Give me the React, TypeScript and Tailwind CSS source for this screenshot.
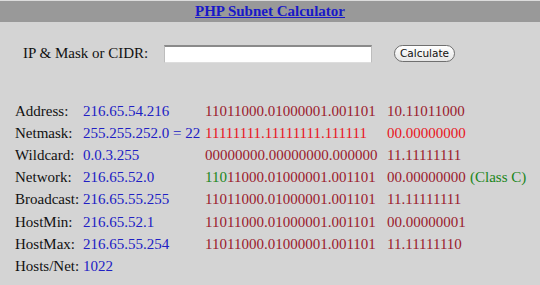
import React from "react";

const serif = { fontFamily: '"Liberation Serif", "Times New Roman", serif' };

type Row = {
  label: string;
  value: string;
  bin: React.ReactNode;
  last?: React.ReactNode;
  extra?: React.ReactNode;
};

const R = "text-[#9a1a2c]";
const RB = "text-[#e8141c]";
const G = "text-[#1a861a]";

const rows: Row[] = [
  { label: "Address:", value: "216.65.54.216", bin: <span className={R}>11011000.01000001.001101</span>, last: <span className={R}>10.11011000</span> },
  { label: "Netmask:", value: "255.255.252.0 = 22", bin: <span className={RB}>11111111.11111111.111111</span>, last: <span className={RB}>00.00000000</span> },
  { label: "Wildcard:", value: "0.0.3.255", bin: <span className={R}>00000000.00000000.000000</span>, last: <span className={R}>11.11111111</span> },
  {
    label: "Network:",
    value: "216.65.52.0",
    bin: (
      <span>
        <span className={G}>110</span>
        <span className={R}>11000.01000001.001101</span>
      </span>
    ),
    last: <span className={R}>00.00000000</span>,
    extra: <span className={G}>(Class C)</span>,
  },
  { label: "Broadcast:", value: "216.65.55.255", bin: <span className={R}>11011000.01000001.001101</span>, last: <span className={R}>11.11111111</span> },
  { label: "HostMin:", value: "216.65.52.1", bin: <span className={R}>11011000.01000001.001101</span>, last: <span className={R}>00.00000001</span> },
  { label: "HostMax:", value: "216.65.55.254", bin: <span className={R}>11011000.01000001.001101</span>, last: <span className={R}>11.11111110</span> },
  { label: "Hosts/Net:", value: "1022", bin: null },
];

export default function App() {
  return (
    <div className="w-[540px] h-[285px] bg-[#d4d4d4] overflow-hidden" style={serif}>
      <div className="h-[1px] bg-[#dcdcdc]" />
      <div className="h-[21px] bg-[#999999] flex items-center justify-center">
        <a className="text-[15px] font-bold text-[#1818c8] underline leading-none" href="#">
          PHP Subnet Calculator
        </a>
      </div>
      <div className="flex items-center pl-[23px] mt-[22px] h-[19px]">
        <span className="w-[141px] text-[15px] text-[#111] leading-none">IP &amp; Mask or CIDR:</span>
        <div className="w-[208px] h-[18px] bg-white border-t-2 border-t-[#8a8a8a] border-x border-x-[#bdbdbd] border-b border-b-[#dddddd]" />
        <button
          className="ml-[22px] w-[61px] h-[17px] rounded-full border border-[#6f6f6f] bg-gradient-to-b from-white to-[#e6e6e6] leading-none text-[#111] flex items-center justify-center"
          style={{ fontFamily: '"DejaVu Sans", "Liberation Sans", sans-serif', fontSize: "10.5px" }}
        >
          Calculate
        </button>
      </div>
      <div className="mt-[37px] pl-[15px]">
        {rows.map((r) => (
          <div key={r.label} className="grid grid-cols-[68px_122px_182px_83px_auto] h-[22.1px] items-center text-[15px] leading-[22px] whitespace-nowrap">
            <span className="text-[#111]">{r.label}</span>
            <span className="text-[#2020c4]">{r.value}</span>
            <span>{r.bin}</span>
            <span>{r.last}</span>
            <span>{r.extra}</span>
          </div>
        ))}
      </div>
    </div>
  );
}
